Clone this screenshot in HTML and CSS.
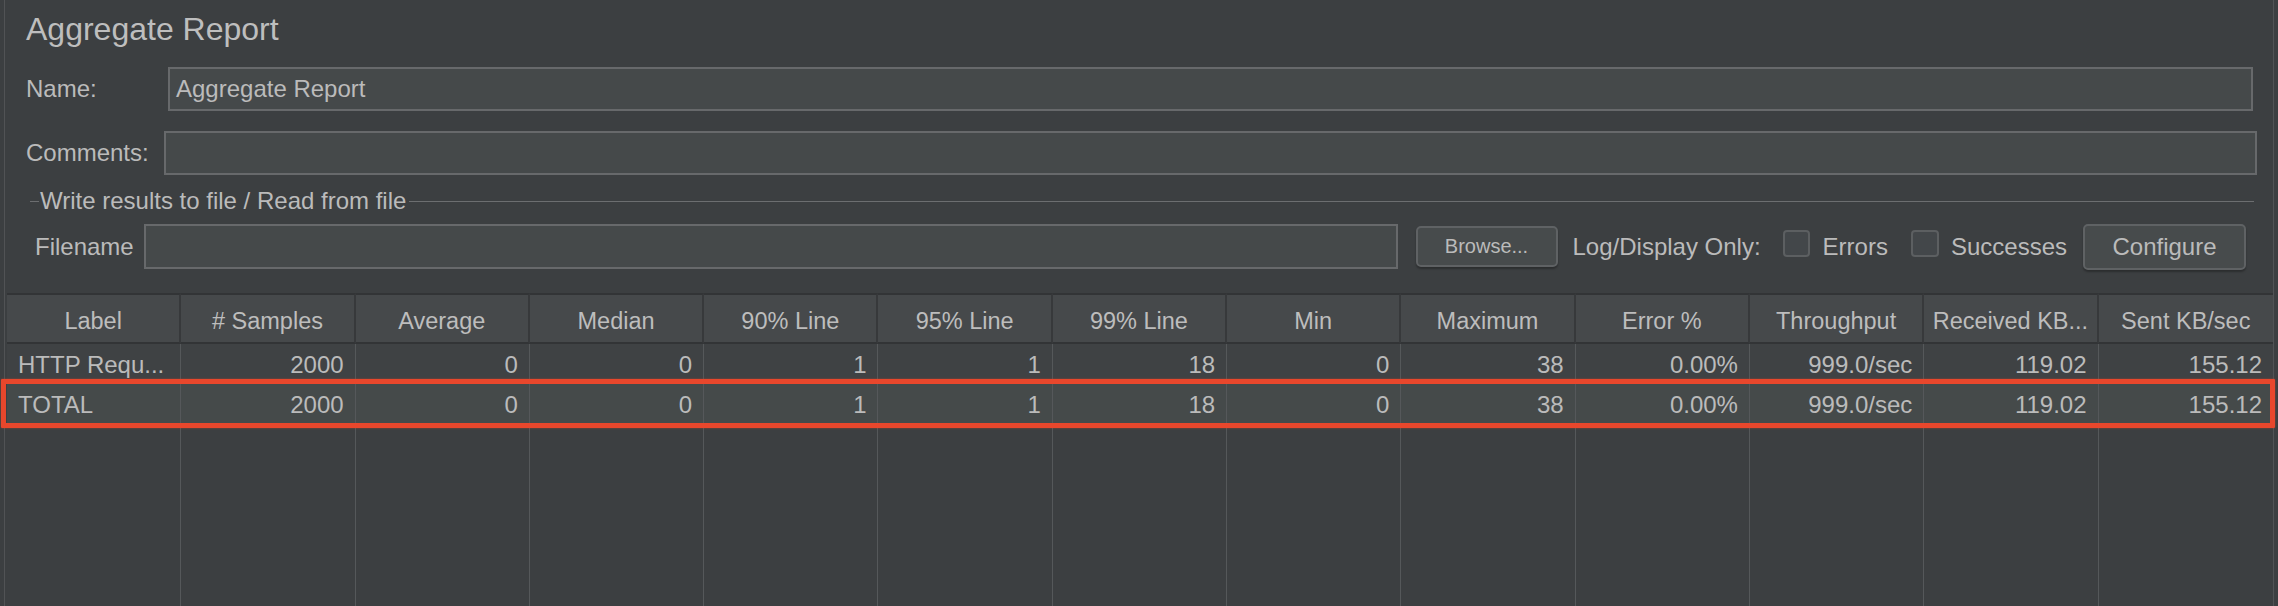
FILE: index.html
```html
<!DOCTYPE html>
<html lang="en">
<head>
<meta charset="utf-8">
<title>Aggregate Report</title>
<link rel="stylesheet" href="styles.css">
</head>
<body>
<div class="panel">
  <h1 class="title">Aggregate Report</h1>

  <div class="field-row name-row">
    <label class="lbl">Name:</label>
    <div class="field">Aggregate Report</div>
  </div>

  <div class="field-row comments-row">
    <label class="lbl">Comments:</label>
    <div class="field"></div>
  </div>

  <div class="legend">
    <span class="rule rule-short"></span>
    <span class="legend-text">Write results to file / Read from file</span>
    <span class="rule rule-long"></span>
  </div>

  <div class="file-row">
    <label class="file-lbl">Filename</label>
    <div class="field file-input"></div>
    <button class="btn btn-browse" type="button">Browse...</button>
    <span class="log-lbl">Log/Display Only:</span>
    <input class="check check-errors" type="checkbox" aria-label="Errors">
    <span class="chk-text chk-errors">Errors</span>
    <input class="check check-succ" type="checkbox" aria-label="Successes">
    <span class="chk-text chk-succ">Successes</span>
    <button class="btn btn-config" type="button">Configure</button>
  </div>

  <div class="table-wrap">
    <table class="report">
      <thead>
        <tr>
          <th>Label</th>
          <th># Samples</th>
          <th>Average</th>
          <th>Median</th>
          <th>90% Line</th>
          <th>95% Line</th>
          <th>99% Line</th>
          <th>Min</th>
          <th>Maximum</th>
          <th>Error %</th>
          <th>Throughput</th>
          <th>Received KB...</th>
          <th>Sent KB/sec</th>
        </tr>
      </thead>
      <tbody>
        <tr class="row-1">
          <td class="cell-label">HTTP Requ...</td>
          <td>2000</td>
          <td>0</td>
          <td>0</td>
          <td>1</td>
          <td>1</td>
          <td>18</td>
          <td>0</td>
          <td>38</td>
          <td>0.00%</td>
          <td>999.0/sec</td>
          <td>119.02</td>
          <td>155.12</td>
        </tr>
        <tr class="row-total">
          <td class="cell-label">TOTAL</td>
          <td>2000</td>
          <td>0</td>
          <td>0</td>
          <td>1</td>
          <td>1</td>
          <td>18</td>
          <td>0</td>
          <td>38</td>
          <td>0.00%</td>
          <td>999.0/sec</td>
          <td>119.02</td>
          <td>155.12</td>
        </tr>
        <tr class="row-filler">
          <td></td><td></td><td></td><td></td><td></td><td></td><td></td>
          <td></td><td></td><td></td><td></td><td></td><td></td>
        </tr>
      </tbody>
    </table>
    <div class="highlight"></div>
  </div>
</div>
</body>
</html>
```

FILE: styles.css
```css
* {
  box-sizing: border-box;
}

html,
body {
  margin: 0;
  height: 100%;
}

body {
  background: #3c3f41;
  color: #bbbbbb;
  font-family: "Liberation Sans", Arial, Helvetica, sans-serif;
  overflow: hidden;
}

.panel {
  margin: 0 4px;
  height: 606px;
  border-left: 1px solid #515355;
  border-right: 1px solid #515355;
  display: flex;
  flex-direction: column;
}

.title {
  margin: 0;
  height: 58px;
  line-height: 58px;
  padding-left: 21px;
  font-size: 32px;
  font-weight: normal;
  color: #bebebe;
}

.field-row {
  display: flex;
  align-items: center;
  height: 44px;
  padding-left: 21px;
  flex: none;
}

.name-row {
  margin-top: 9px;
  padding-right: 20px;
}

.comments-row {
  margin-top: 20px;
  padding-right: 16px;
}

.lbl {
  flex: none;
  font-size: 24px;
  line-height: 44px;
}

.name-row .lbl {
  width: 142px;
}

.comments-row .lbl {
  width: 138px;
}

.field {
  flex: 1;
  height: 44px;
  background: #45494a;
  border: 2px solid #67696b;
  font-size: 24px;
  line-height: 40px;
  padding-left: 6px;
  color: #bbbbbb;
  white-space: nowrap;
}

.legend {
  display: flex;
  align-items: center;
  height: 24px;
  margin-top: 14px;
  padding-left: 25px;
  padding-right: 19px;
  flex: none;
}

.rule {
  height: 1px;
  background: #6c6e70;
}

.rule-short {
  width: 9px;
  flex: none;
}

.rule-long {
  flex: 1;
}

.legend-text {
  font-size: 24px;
  line-height: 24px;
  padding: 0 3px 0 1px;
  white-space: nowrap;
}

.file-row {
  display: flex;
  align-items: center;
  height: 45px;
  margin-top: 11px;
  padding-left: 30px;
  padding-right: 27px;
  flex: none;
}

.file-lbl {
  flex: none;
  width: 109px;
  font-size: 24px;
}

.file-input {
  height: 45px;
}

.btn {
  flex: none;
  display: flex;
  align-items: center;
  justify-content: center;
  padding: 0;
  margin: 0;
  font-family: inherit;
  color: #bbbbbb;
  background: #474b4c;
  border: 2px solid #5f6264;
  border-radius: 5px;
  box-shadow: 0 2px 2px rgba(0, 0, 0, 0.28);
}

.btn-browse {
  width: 142px;
  height: 41px;
  margin-left: 18px;
  font-size: 20px;
}

.btn-config {
  width: 163px;
  height: 46px;
  margin-left: 16px;
  font-size: 24px;
}

.log-lbl {
  flex: none;
  margin-left: 15px;
  font-size: 24px;
  white-space: nowrap;
}

.check {
  -webkit-appearance: none;
  appearance: none;
  flex: none;
  width: 27px;
  height: 27px;
  margin: 0 0 6px 0;
  background: #43474a;
  border: 2px solid #5c5f61;
  border-radius: 4px;
}

.check-errors {
  margin-left: 22px;
}

.check-succ {
  margin-left: 23px;
  width: 28px;
}

.chk-text {
  flex: none;
  font-size: 24px;
  white-space: nowrap;
}

.chk-errors {
  margin-left: 13px;
}

.chk-succ {
  margin-left: 12px;
}

.table-wrap {
  position: relative;
  flex: 1;
  margin-top: 24px;
  margin-left: 2px;
}

.report {
  width: 100%;
  table-layout: fixed;
  border-collapse: separate;
  border-spacing: 0;
}

.report th {
  height: 51px;
  padding: 5px 6px 0;
  background: #46494b;
  border-top: 2px solid #323436;
  border-bottom: 2px solid #323436;
  border-right: 2px solid #37393b;
  font-size: 23.5px;
  font-weight: normal;
  line-height: 42px;
  text-align: center;
  color: #bdbdbd;
  white-space: nowrap;
  overflow: hidden;
}

.report th:last-child {
  border-right: 0;
}

.report td {
  height: 40px;
  padding: 2px 11px 0;
  border-right: 1px solid #55585a;
  font-size: 24px;
  line-height: 38px;
  text-align: right;
  white-space: nowrap;
  overflow: hidden;
  color: #bbbbbb;
}

.report td:last-child {
  border-right: 0;
}

.report td.cell-label {
  text-align: left;
}

.row-1 td {
  background: #3f4244;
}

.row-total td {
  background: #454a4a;
}

.row-filler td {
  height: 182px;
  padding: 0;
}

.highlight {
  position: absolute;
  left: -6px;
  top: 86px;
  width: 2274px;
  height: 49px;
  border: 5px solid #e8472c;
  border-radius: 1px;
  box-shadow: 0 0 2px rgba(232, 71, 44, 0.6);
  pointer-events: none;
}
```
